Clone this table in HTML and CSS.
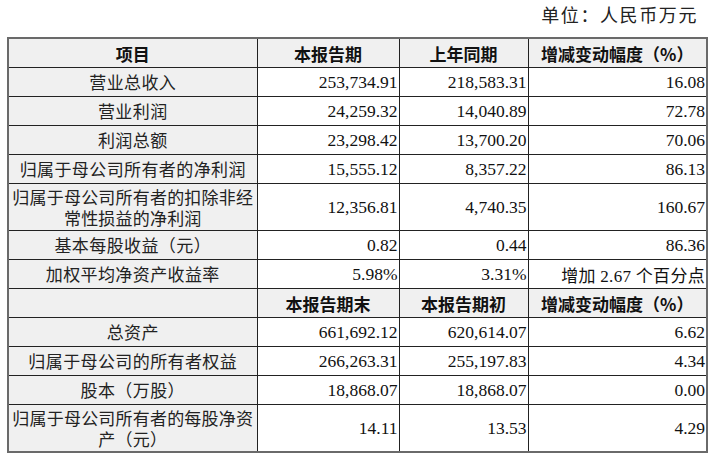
FILE: index.html
```html
<!DOCTYPE html>
<html lang="zh">
<head>
<meta charset="utf-8">
<link rel="stylesheet" href="styles.css">
</head>
<body>
<div class="unit">单位：人民币万元</div>
<table class="fin">
  <colgroup>
    <col class="c1"><col class="c2"><col class="c3"><col class="c4">
  </colgroup>
  <tr class="head">
    <th>项目</th><th>本报告期</th><th>上年同期</th><th>增减变动幅度（%）</th>
  </tr>
  <tr><td class="lbl">营业总收入</td><td class="num">253,734.91</td><td class="num">218,583.31</td><td class="num">16.08</td></tr>
  <tr><td class="lbl">营业利润</td><td class="num">24,259.32</td><td class="num">14,040.89</td><td class="num">72.78</td></tr>
  <tr><td class="lbl">利润总额</td><td class="num">23,298.42</td><td class="num">13,700.20</td><td class="num">70.06</td></tr>
  <tr><td class="lbl">归属于母公司所有者的净利润</td><td class="num">15,555.12</td><td class="num">8,357.22</td><td class="num">86.13</td></tr>
  <tr class="dbl"><td class="lbl">归属于母公司所有者的扣除非经常性损益的净利润</td><td class="num">12,356.81</td><td class="num">4,740.35</td><td class="num">160.67</td></tr>
  <tr><td class="lbl">基本每股收益（元）</td><td class="num">0.82</td><td class="num">0.44</td><td class="num">86.36</td></tr>
  <tr><td class="lbl">加权平均净资产收益率</td><td class="num">5.98%</td><td class="num">3.31%</td><td class="num mix">增加 2.67 个百分点</td></tr>
  <tr class="head">
    <th></th><th>本报告期末</th><th>本报告期初</th><th>增减变动幅度（%）</th>
  </tr>
  <tr><td class="lbl">总资产</td><td class="num">661,692.12</td><td class="num">620,614.07</td><td class="num">6.62</td></tr>
  <tr><td class="lbl">归属于母公司的所有者权益</td><td class="num">266,263.31</td><td class="num">255,197.83</td><td class="num">4.34</td></tr>
  <tr><td class="lbl">股本（万股）</td><td class="num">18,868.07</td><td class="num">18,868.07</td><td class="num">0.00</td></tr>
  <tr class="dbl"><td class="lbl">归属于母公司所有者的每股净资产（元）</td><td class="num">14.11</td><td class="num">13.53</td><td class="num">4.29</td></tr>
</table>
</body>
</html>
```
FILE: styles.css
```css
html, body {
  margin: 0;
  padding: 0;
  background: #fff;
}
body {
  width: 712px;
  height: 457px;
  overflow: hidden;
  font-family: "Liberation Serif", "Noto Sans CJK SC", serif;
  color: #111;
}
.unit {
  height: 37px;
  box-sizing: border-box;
  padding-top: 3px;
  padding-right: 14px;
  text-align: right;
  font-family: "Noto Sans CJK SC", sans-serif;
  font-size: 18px;
  letter-spacing: 1.6px;
  line-height: 22px;
  color: #222;
}
.fin {
  margin-left: 7px;
  width: 699px;
  border-collapse: collapse;
  table-layout: fixed;
  border: 2px solid #6a6a6a;
}
.c1 { width: 249px; }
.c2 { width: 142px; }
.c3 { width: 129px; }
.c4 { width: 179px; }
.fin th, .fin td {
  border: 1px solid #222;
  padding: 0 1px;
  height: 28px;
  white-space: nowrap;
  overflow: hidden;
}
.fin tr.dbl td { height: 46px; }
.fin tr.dbl td.lbl {
  white-space: normal;
  padding: 0;
  letter-spacing: 0.2px;
  line-height: 21px;
}
.head th {
  background: #f0f0f0;
  font-family: "Noto Sans CJK SC", sans-serif;
  font-weight: 700;
  font-size: 17px;
  text-align: center;
  color: #111;
}
.lbl {
  background: #f0f0f0;
  text-align: center;
  font-family: "Noto Sans CJK SC", sans-serif;
  font-size: 17px;
  letter-spacing: 0.4px;
  line-height: 20px;
  color: #222;
}
.num {
  text-align: right;
  font-family: "Liberation Serif", serif;
  font-size: 17.5px;
  color: #111;
}
.mix {
  font-family: "Liberation Serif", "Noto Sans CJK SC", serif;
  font-size: 17px;
  letter-spacing: 0.3px;
}
```
